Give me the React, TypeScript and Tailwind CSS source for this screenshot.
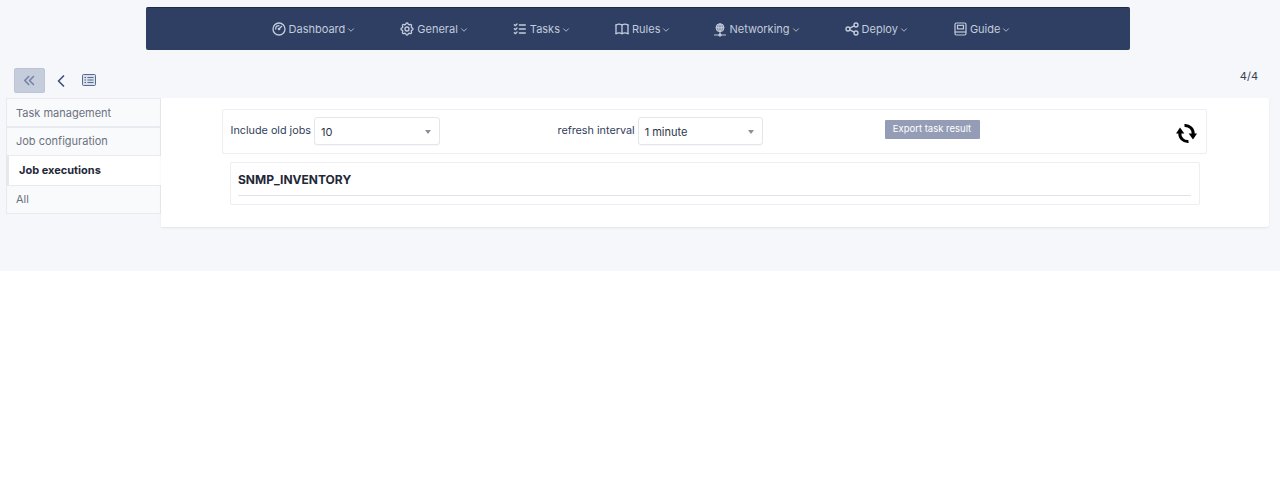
import React from "react";
import { TbGauge, TbSettings, TbListCheck, TbBook, TbShare, TbChevronDown, TbChevronLeft, TbChevronsLeft } from "react-icons/tb";

function NetIcon() {
  return (
    <svg width="14" height="14" viewBox="0 0 14 14" fill="none" stroke="currentColor" strokeWidth="1" className="mt-[1px]">
      <circle cx="7" cy="4.700" r="4" fill="currentColor" fillOpacity="0.6" />
      <path d="M3 4.700h8M7 .7c-2 2.500-2 5.500 0 8M7 .7c2 2.500 2 5.500 0 8M7 8.700v2.800M1 12h12" />
      <circle cx="7" cy="12" r="1.200" fill="currentColor" />
    </svg>
  );
}

function GuideIcon() {
  return (
    <svg width="13" height="14" viewBox="0 0 13 14" fill="none" stroke="currentColor" strokeWidth="1.200">
      <rect x="1" y="1" width="11" height="12" rx="1.500" />
      <rect x="3.500" y="3.300" width="6" height="3.600" />
      <path d="M1 10h11" />
    </svg>
  );
}

function NavItem({ icon, label, tight }: { icon: React.ReactNode; label: string; tight?: boolean }) {
  return (
    <div className={`flex items-center px-[22.500px] text-[#c3cbdc] text-[11px] leading-none ${tight ? "-mr-[3px]" : ""}`}>
      <span className="w-[16px] h-[16px] flex items-center">{icon}</span>
      <span>{label}</span>
      <TbChevronDown size={10} className="ml-[1px] mt-[1px]" />
    </div>
  );
}

function ListIcon() {
  return (
    <svg width="14" height="12" viewBox="0 0 14 12" fill="none" stroke="#5a6b90" strokeWidth="1">
      <rect x="0.500" y="0.500" width="13" height="11" rx="1" fill="#d9dfea" />
      <path d="M2.500 3.500h1.500M2.500 6h1.500M2.500 8.500h1.500M5.500 3.500h6M5.500 6h6M5.500 8.500h6" />
    </svg>
  );
}

function RefreshIcon() {
  return (
    <svg width="21" height="21" viewBox="0 0 21 21" fill="none" stroke="black" strokeWidth="3" className="ml-auto mt-[3px]">
      <path d="M8.500 2.500A8 8 0 0 1 17.200 11" />
      <polygon points="12.700,10.500 21,10.500 17,16.500" fill="black" stroke="none" />
      <path d="M12.500 18.500A8 8 0 0 1 3.800 10" />
      <polygon points="8.300,10.500 0,10.500 4,4.500" fill="black" stroke="none" />
    </svg>
  );
}

function Select({ value, width }: { value: string; width: string }) {
  return (
    <div className={`${width} h-[28px] bg-white border border-[#e3e6ec] rounded-[3px] flex items-center justify-between pl-[6px] pr-[8px] text-[11px] text-[#2d3748] shadow-[0_1px_1px_rgba(0,0,0,0.03)]`}>
      <span className="mt-[2px]">{value}</span>
      <span className="w-0 h-0 border-l-[3.500px] border-r-[3.500px] border-t-[4px] border-l-transparent border-r-transparent border-t-[#8a8f99] mt-[2px]" />
    </div>
  );
}

function Tab({ label, active, first }: { label: string; active?: boolean; first?: boolean }) {
  if (active) {
    return (
      <div className="h-[29px] bg-white border-l-[3px] border-l-[#e6e8ee] pl-[10px] flex items-center font-bold text-[#1f2937] text-[11px]">
        {label}
      </div>
    );
  }
  return (
    <div className={`h-[29px] bg-[#f9fafc] border border-[#e8eaf0] pl-[9px] flex items-center text-[#6b7280] text-[11px] ${first ? "pt-[1px]" : ""}`}>
      {label}
    </div>
  );
}

export default function App() {
  return (
    <div className="min-h-[501px] bg-white" style={{ fontFamily: "Inter, 'Liberation Sans', sans-serif" }}>
      <div className="h-[271px] bg-[#f5f7fb] pt-[7px]">
        <nav className="ml-[146px] w-[984px] h-[43px] pl-[8px] bg-[#2e3f63] rounded-[2px] border-t border-[#1f2a44] flex items-center justify-center">
          <NavItem icon={<TbGauge size={16} className="-ml-[2px]" />} label="Dashboard" />
          <NavItem icon={<TbSettings size={16} className="-ml-[2px]" />} label="General" />
          <NavItem icon={<TbListCheck size={16} className="-ml-[2px]" />} label="Tasks" />
          <NavItem icon={<TbBook size={16} className="-ml-[2px]" />} label="Rules" tight />
          <NavItem icon={<NetIcon />} label="Networking" />
          <NavItem icon={<TbShare size={16} className="-ml-[2px]" />} label="Deploy" />
          <NavItem icon={<GuideIcon />} label="Guide" />
        </nav>

        <div className="flex items-center justify-between mt-[18px] pl-[14px] pr-[22px] h-[25px]">
          <div className="flex items-center">
            <div className="w-[31px] h-[25px] bg-[#c5ccdc] border border-[#bcc4d6] rounded-[2px] flex items-center justify-center text-[#7482a3]">
              <TbChevronsLeft size={19} />
            </div>
            <TbChevronLeft size={20} className="ml-[6px] text-[#3d4f78]" />
            <span className="ml-[11px] -mt-[2px]"><ListIcon /></span>
          </div>
          <span className="text-[11px] text-[#374151] -mt-[8px]">4/4</span>
        </div>

        <div className="flex mt-[5px] ml-[6px] mr-[11px]">
          <div className="w-[155px] flex flex-col">
            <Tab label="Task management" first />
            <Tab label="Job configuration" />
            <Tab label="Job executions" active />
            <Tab label="All" />
          </div>
          <div className="flex-1 h-[129px] bg-white rounded-r-[2px] shadow-[0_1px_2px_rgba(0,0,0,0.08)] pt-[11px] pl-[61px] pr-[62px]">
            <div className="h-[45px] border border-[#eceef2] rounded-[2px] flex items-center pl-[7.500px] pr-[9px] text-[10.800px] text-[#33405c]">
              <div className="flex items-center w-[327px] -mt-[1px]">
                <span className="mr-[3px]">Include old jobs</span>
                <Select value="10" width="w-[126px]" />
              </div>
              <div className="flex items-center w-[327px] -mt-[1px]">
                <span className="mr-[3px]">refresh interval</span>
                <Select value="1 minute" width="w-[125px]" />
              </div>
              <div className="w-[95px] h-[19px] bg-[#949db5] rounded-[1px] flex items-center justify-center text-white text-[9.500px] -mt-[5px]">
                Export task result
              </div>
              <RefreshIcon />
            </div>
            <div className="ml-[8px] mr-[7px] mt-[8px] h-[43px] border border-[#eceef2] rounded-[2px] pl-[7px] pr-[8px] pt-[8px]">
              <div className="h-[25px] border-b border-[#e0e3e8] text-[12px] font-bold text-[#1f2937]">SNMP_INVENTORY</div>
            </div>
          </div>
        </div>
      </div>
    </div>
  );
}
